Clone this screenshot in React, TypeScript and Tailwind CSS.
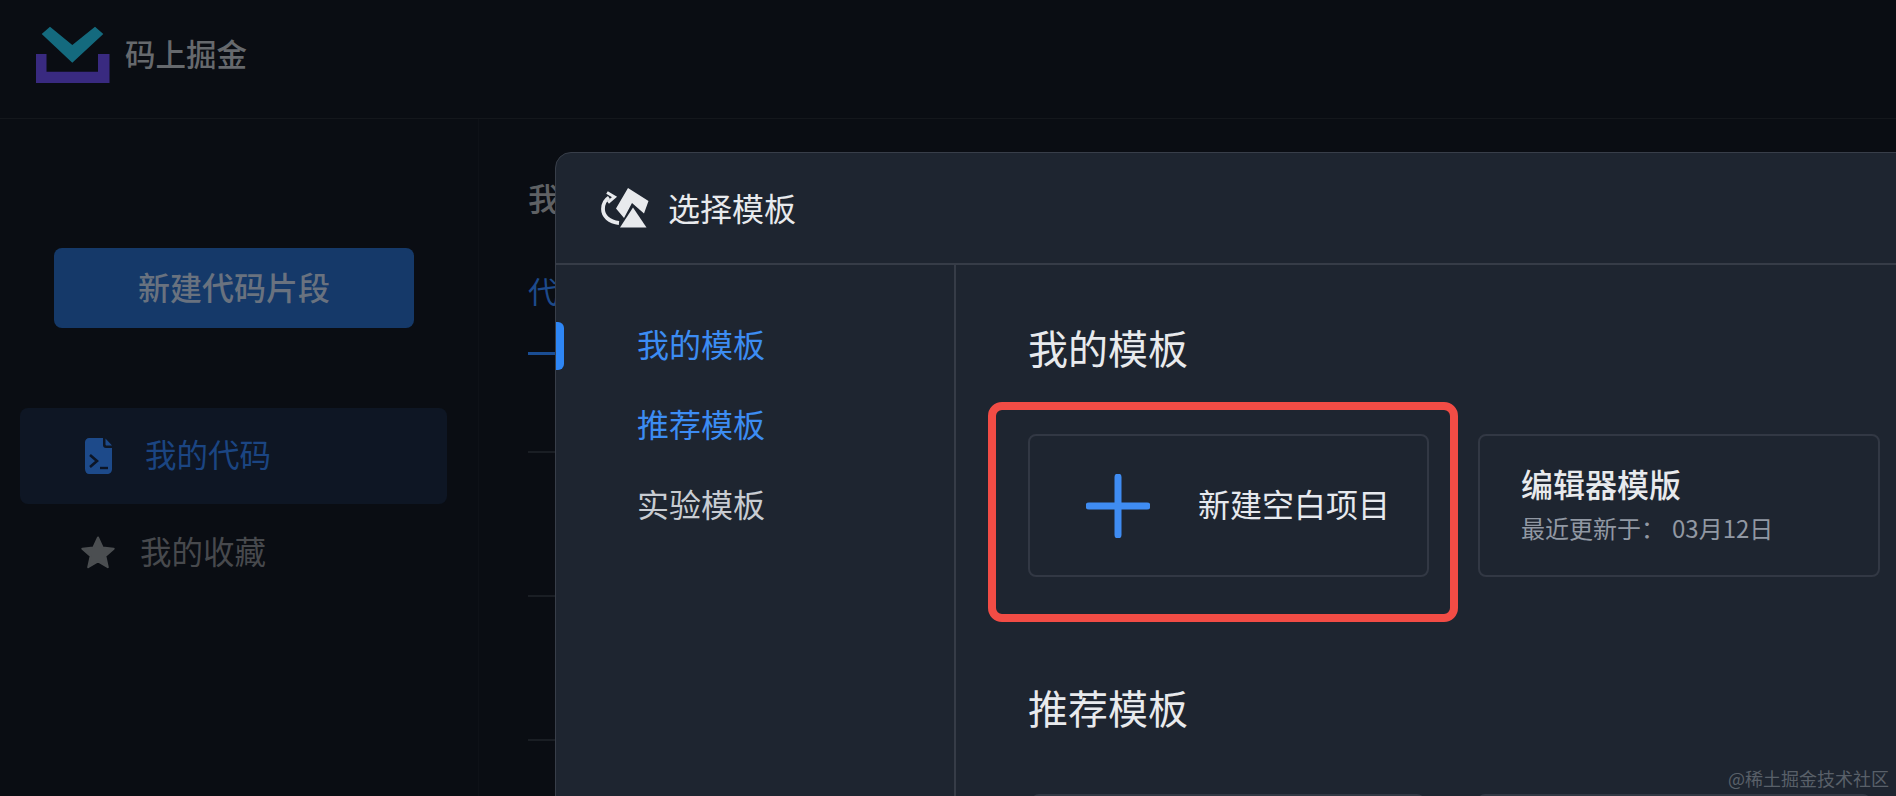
import React from "react";

const font = { fontFamily: '"Noto Sans CJK SC", "Noto Sans", sans-serif' };

function Logo() {
  return (
    <svg width="74" height="58" viewBox="36 26 74 58" className="shrink-0">
      <path d="M36 54H46.500V71.700H98V54H109.500V83H36Z" fill="#392a80" />
      <path d="M41.700 34L50 26.700L72.300 45L95 26.700L103.300 34L72.300 62.700Z" fill="#146a7e" />
    </svg>
  );
}

function CodeFileIcon() {
  return (
    <svg width="27" height="36" viewBox="0 0 27 36" className="shrink-0">
      <path d="M4 0H18V7C18 9 19 10 21 10H27V31C27 34 25 36 22 36H4C2 36 0 34 0 31V4C0 2 2 0 4 0Z" fill="#1d4a8a" />
      <path d="M20.500 0.500L27 7.500H21.500C21 7.500 20.500 7 20.500 6.500Z" fill="#1d4a8a" />
      <path d="M5 17L12 23L5 29" fill="none" stroke="#0c1526" strokeWidth="2.600" />
      <path d="M15 30H23" fill="none" stroke="#0c1526" strokeWidth="2.400" />
    </svg>
  );
}

function StarIcon() {
  return (
    <svg width="36" height="36" viewBox="0 0 36 36" className="shrink-0">
      <path d="M18 2.500L22.700 12.600L33.700 13.700L25.400 21.100L27.800 32.200L18 26.500L8.200 32.200L10.600 21.100L2.300 13.700L13.300 12.600Z" fill="#4b4e51" stroke="#4b4e51" strokeWidth="2" strokeLinejoin="round" />
    </svg>
  );
}

function TemplateIcon() {
  return (
    <svg width="50" height="42" viewBox="599 186 50 42" className="shrink-0">
      <path d="M627 187L647.500 200L643 212.500L631 202L623 217L615 207.500Z" fill="#e8eaed" />
      <path d="M632 206.500L645.500 226.500H619Z" fill="#e8eaed" />
      <path d="M618 222C608 221 602 215 602 208C602 203 604 199 608 196.500" fill="none" stroke="#e8eaed" strokeWidth="3.800" />
      <path d="M606 191.500L613.500 196L607 201.500" fill="none" stroke="#e8eaed" strokeWidth="3" />
    </svg>
  );
}

function PlusIcon() {
  return (
    <svg width="64" height="64" viewBox="0 0 64 64" className="shrink-0">
      <path d="M32 3V61M3 32H61" stroke="#3f8cf2" strokeWidth="7" strokeLinecap="round" />
    </svg>
  );
}

function Background() {
  return (
    <div className="flex flex-col h-full">
      <header className="h-[119px] shrink-0 flex items-center pl-[36px] border-b border-[#14171c]">
        <div className="flex items-center gap-[15px] mb-[8px]">
          <Logo />
          <span className="text-[30.500px] leading-[40px] font-medium text-[#66696d] pb-[5px]">码上掘金</span>
        </div>
      </header>
      <div className="flex flex-1 min-h-0">
        <aside className="w-[479px] shrink-0 border-r border-[#0e1117] pl-[20px] pt-[129px]">
          <button className="ml-[34px] w-[360px] h-[80px] rounded-[8px] bg-[#153969] text-[32px] leading-[40px] font-medium pb-[5px] text-[#69727f] block">
            新建代码片段
          </button>
          <div className="mt-[80px] w-[427px] h-[96px] rounded-[8px] bg-[#0e1624] flex items-center pl-[65px] gap-[33px]">
            <CodeFileIcon />
            <span className="text-[31.500px] leading-[40px] pb-[6px] text-[#1b4582]">我的代码</span>
          </div>
          <div className="mt-[26px] flex items-center pl-[60px] gap-[24px]">
            <StarIcon />
            <span className="text-[31.500px] leading-[40px] pb-[6px] text-[#47494d]">我的收藏</span>
          </div>
        </aside>
        <main className="w-[76px] shrink-0 overflow-hidden pl-[49px] pt-[56px]">
          <div className="w-[27px] overflow-hidden whitespace-nowrap text-[32px] leading-[44px] font-medium text-[#5f6164]">我的代码片段</div>
          <div className="mt-[51px] w-[27px] overflow-hidden whitespace-nowrap text-[30px] leading-[40px] text-[#1d4a8b]">代码片段</div>
          <div className="mt-[42px] w-[60px] h-[3px] bg-[#1a4d94]" />
          <div className="mt-[96px] w-[100px] h-[2px] bg-[#1a1e24]" />
          <div className="mt-[142px] w-[100px] h-[2px] bg-[#1a1e24]" />
          <div className="mt-[142px] w-[100px] h-[2px] bg-[#1a1e24]" />
        </main>
      </div>
    </div>
  );
}

function NavItem({ label, active }: { label: string; active?: boolean }) {
  return (
    <div className={`h-[80px] flex items-center pl-[81px] pb-[5px] text-[32px] ${active ? "text-[#3c8cf3]" : "text-[#c8ccd2]"}`}>
      {label}
    </div>
  );
}

function Modal() {
  return (
    <div className="absolute left-[555px] top-[152px] w-[1400px] h-[700px] rounded-tl-[16px] border border-[#383e49] bg-[#1e2530] flex flex-col">
      <div className="h-[112px] shrink-0 border-b-2 border-[#363c47] flex items-center pl-[44px] gap-[18px]">
        <TemplateIcon />
        <span className="text-[32px] leading-[44px] pb-[2px] text-[#e8eaed]">选择模板</span>
      </div>
      <div className="flex flex-1 min-h-0">
        <nav className="relative w-[400px] shrink-0 border-r-2 border-[#363c47] pt-[40px]">
          <div className="absolute left-0 top-[57px] w-[8px] h-[48px] rounded-r-[6px] bg-[#2e86f5]" />
          <NavItem label="我的模板" active />
          <NavItem label="推荐模板" active />
          <NavItem label="实验模板" />
        </nav>
        <div className="flex-1 pl-[72px] pt-[54px]">
          <h2 className="text-[40px] leading-[56px] text-[#e8eaed]">我的模板</h2>
          <div className="mt-[59px] flex gap-[49px]">
            <div className="w-[401px] h-[143px] rounded-[8px] border-2 border-[#323844] flex items-center pl-[56px] gap-[48px]">
              <PlusIcon />
              <span className="text-[32px] leading-[44px] pb-[6px] text-[#e6e9ee]">新建空白项目</span>
            </div>
            <div className="w-[402px] h-[143px] rounded-[8px] border-2 border-[#323844] pl-[41px] pt-[25px]">
              <div className="text-[32px] leading-[44px] font-medium text-[#e8eaed]">编辑器模版</div>
              <div className="mt-[7px] text-[24px] leading-[32px] text-[#9198a3]">
                最近更新于：<span className="ml-[7px]">03月12日</span>
              </div>
            </div>
          </div>
          <h2 className="mt-[102px] text-[40px] leading-[56px] text-[#e8eaed]">推荐模板</h2>
          <div className="mt-[59px] flex gap-[52px] pl-[3px]">
            <div className="w-[394px] h-[143px] rounded-[8px] border-2 border-[#323844]" />
            <div className="w-[394px] h-[143px] rounded-[8px] border-2 border-[#323844]" />
          </div>
        </div>
      </div>
    </div>
  );
}

export default function App() {
  return (
    <div style={font} className="relative w-[1896px] h-[796px] overflow-hidden bg-[#0a0d13]">
      <Background />
      <Modal />
      <div className="absolute left-[988px] top-[402px] w-[470px] h-[220px] rounded-[14px] border-[8px] border-[#f24c45]" />
      <div className="absolute left-[1728px] top-[764px] text-[18px] leading-[28px] text-[#596069]">@稀土掘金技术社区</div>
    </div>
  );
}
